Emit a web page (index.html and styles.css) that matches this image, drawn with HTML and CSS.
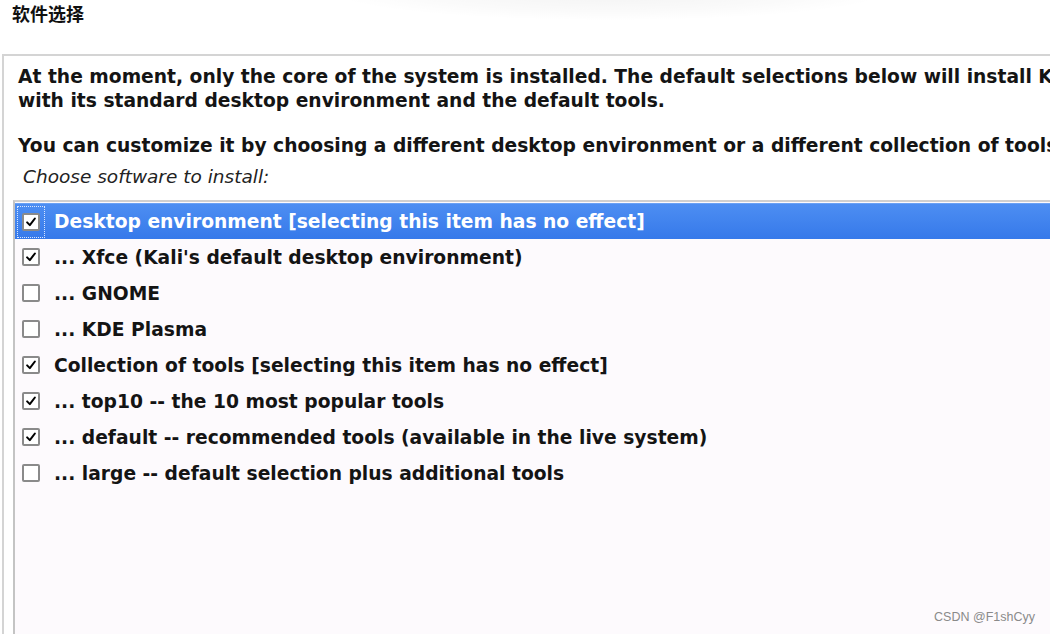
FILE: index.html
```html
<!DOCTYPE html>
<html>
<head>
<meta charset="utf-8">
<link rel="stylesheet" href="styles.css">
</head>
<body>
<div class="page">
  <div class="shade"></div>
  <header class="title">软件选择</header>
  <section class="panel">
    <p class="intro">At the moment, only the core of the system is installed. The default selections below will install Kali Linux<br>with its standard desktop environment and the default tools.</p>
    <p class="intro second">You can customize it by choosing a different desktop environment or a different collection of tools.</p>
    <p class="prompt">Choose software to install:</p>
    <div class="list">
      <div class="row selected"><span class="focus"><span class="box checked"><svg viewBox="0 0 18 18"><path d="M4 9.5 L7.5 13 L14 4.5" /></svg></span></span><span class="label">Desktop environment [selecting this item has no effect]</span></div>
      <div class="row"><span class="focus"><span class="box checked"><svg viewBox="0 0 18 18"><path d="M4 9.5 L7.5 13 L14 4.5" /></svg></span></span><span class="label">... Xfce (Kali's default desktop environment)</span></div>
      <div class="row"><span class="focus"><span class="box"></span></span><span class="label">... GNOME</span></div>
      <div class="row"><span class="focus"><span class="box"></span></span><span class="label">... KDE Plasma</span></div>
      <div class="row"><span class="focus"><span class="box checked"><svg viewBox="0 0 18 18"><path d="M4 9.5 L7.5 13 L14 4.5" /></svg></span></span><span class="label">Collection of tools [selecting this item has no effect]</span></div>
      <div class="row"><span class="focus"><span class="box checked"><svg viewBox="0 0 18 18"><path d="M4 9.5 L7.5 13 L14 4.5" /></svg></span></span><span class="label">... top10 -- the 10 most popular tools</span></div>
      <div class="row"><span class="focus"><span class="box checked"><svg viewBox="0 0 18 18"><path d="M4 9.5 L7.5 13 L14 4.5" /></svg></span></span><span class="label">... default -- recommended tools (available in the live system)</span></div>
      <div class="row"><span class="focus"><span class="box"></span></span><span class="label">... large -- default selection plus additional tools</span></div>
    </div>
  </section>
  <div class="watermark">CSDN @F1shCyy</div>
</div>
</body>
</html>
```

FILE: styles.css
```css
html, body {
  margin: 0;
  padding: 0;
  background: #ffffff;
  overflow: hidden;
}
.page {
  position: relative;
  width: 1050px;
  height: 634px;
  overflow: hidden;
  font-family: "DejaVu Sans", "Noto Sans CJK SC", sans-serif;
  color: #111;
}
.shade {
  position: absolute;
  left: 330px;
  top: -40px;
  width: 560px;
  height: 60px;
  background: radial-gradient(ellipse at center, rgba(0,0,0,0.05) 0%, rgba(0,0,0,0.02) 50%, rgba(0,0,0,0) 72%);
}
.title {
  position: relative;
  height: 54px;
  padding: 2px 0 0 12px;
  box-sizing: border-box;
  font-family: "Noto Sans CJK SC", sans-serif;
  font-weight: 700;
  font-size: 18px;
  line-height: 22px;
  color: #111;
}
.panel {
  margin-left: 2px;
  height: 600px;
  border-top: 2px solid #d4d4d4;
  border-left: 2px solid #d4d4d4;
  background: #ffffff;
  padding: 9px 0 0 0;
  white-space: nowrap;
  overflow: hidden;
}
.intro {
  margin: 0 0 0 14px;
  font-size: 18.7px;
  line-height: 24px;
  font-weight: 700;
  color: #141414;
}
.intro.second {
  margin-top: 21px;
}
.prompt {
  margin: 7px 0 0 19px;
  font-size: 18.5px;
  line-height: 24px;
  font-style: italic;
  color: #222;
}
.list {
  margin: 11px 0 0 9px;
  height: 500px;
  border-top: 2px solid #d0d0d0;
  border-left: 2px solid #c4c4c4;
  background: #fdfafd;
  padding-top: 1px;
}
.row {
  display: flex;
  align-items: center;
  height: 36px;
  padding-left: 2px;
  font-size: 18.7px;
  font-weight: 700;
  color: #141414;
}
.row.selected {
  background: linear-gradient(#4d8ef2, #3679ea);
  border-top: 1px solid #6aa2f5;
  box-sizing: border-box;
  color: #ffffff;
}
.focus {
  display: flex;
  align-items: center;
  justify-content: center;
  width: 28px;
  height: 32px;
  box-sizing: border-box;
  border: 1px dotted transparent;
}
.row.selected .focus {
  border-color: #d8e6ff;
}
.box {
  width: 18px;
  height: 18px;
  box-sizing: border-box;
  border: 2px solid #8a8a8a;
  border-radius: 2px;
  background: #ffffff;
  display: flex;
}
.box svg {
  width: 14px;
  height: 14px;
}
.box svg path {
  fill: none;
  stroke: #000;
  stroke-width: 2.6;
  stroke-linecap: round;
  stroke-linejoin: round;
}
.label {
  margin-left: 9px;
}
.watermark {
  position: absolute;
  right: 15px;
  top: 610px;
  font-family: "Liberation Sans", sans-serif;
  font-size: 12.5px;
  color: #8a8a8a;
}
```
